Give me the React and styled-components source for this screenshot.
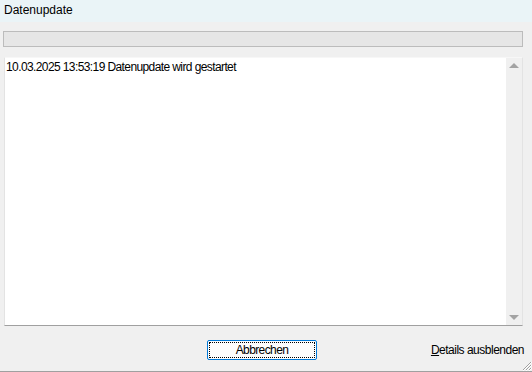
import styled, { createGlobalStyle } from "styled-components";

const GlobalStyle = createGlobalStyle`
  html, body {
    margin: 0;
    padding: 0;
    background: #f0f0f0;
  }
  body {
    font-family: "Liberation Sans", Arial, sans-serif;
    font-size: 12px;
    color: #000;
  }
`;

const Window = styled.div`
  width: 532px;
  height: 372px;
  display: flex;
  flex-direction: column;
  background: #f0f0f0;
  box-sizing: border-box;
  border-bottom: 1px solid #a0a0a0;
  position: relative;
  overflow: hidden;
`;

const TitleBar = styled.div`
  height: 22px;
  flex: none;
  background: #eaf4f7;
  display: flex;
  align-items: center;
  padding: 0 4px 2px;
  box-sizing: border-box;
`;

const Body = styled.div`
  flex: 1;
  display: flex;
  flex-direction: column;
  padding: 9px 9px 0 3px;
  min-height: 0;
`;

const ProgressBar = styled.div`
  height: 16px;
  width: 520px;
  box-sizing: border-box;
  border: 1px solid #bcbcbc;
  background: #e6e6e6;
  flex: none;
`;

const LogBox = styled.div`
  margin: 10px 0 0 1px;
  width: 519px;
  height: 269px;
  box-sizing: border-box;
  background: #fff;
  border-top: 1px solid #f7f7f7;
  border-left: 1px solid #e3e3e3;
  border-right: 1px solid #e3e3e3;
  border-bottom: 1px solid #a0a0a0;
  display: flex;
  flex: none;
`;

const LogText = styled.div`
  flex: 1;
  padding: 2px 1px;
  line-height: 14px;
  letter-spacing: -0.6px;
`;

const ScrollBar = styled.div`
  width: 16px;
  background: #f0f0f0;
  display: flex;
  flex-direction: column;
  justify-content: space-between;
  align-items: center;
  padding: 5px 0 5px;
`;

const Arrow = styled.div`
  width: 0;
  height: 0;
  border-left: 5px solid transparent;
  border-right: 5px solid transparent;
  ${(p) =>
    p.$down
      ? "border-top: 5px solid #a3a3a3;"
      : "border-bottom: 5px solid #a3a3a3;"}
`;

const Footer = styled.div`
  display: flex;
  align-items: flex-start;
  padding-top: 14px;
`;

const Button = styled.button`
  margin-left: 204px;
  width: 110px;
  height: 20px;
  box-sizing: border-box;
  border: 1px solid #0078d7;
  border-radius: 2px;
  background: #fdfdfd;
  font: inherit;
  padding: 1px;
  display: flex;
  cursor: default;
`;

const FocusRect = styled.span`
  flex: 1;
  border: 1px dotted #000;
  display: flex;
  align-items: center;
  justify-content: center;
  line-height: 14px;
  letter-spacing: -0.6px;
`;

const DetailsLink = styled.span`
  margin-left: auto;
  margin-right: -1px;
  padding-top: 3px;
  white-space: nowrap;
  letter-spacing: -0.5px;
  u {
    text-decoration: underline;
  }
`;

const Grip = styled.svg`
  position: absolute;
  right: 0;
  bottom: 0;
`;

export default function App() {
  return (
    <>
      <GlobalStyle />
      <Window>
        <TitleBar>Datenupdate</TitleBar>
        <Body>
          <ProgressBar />
          <LogBox>
            <LogText>10.03.2025 13:53:19 Datenupdate wird gestartet</LogText>
            <ScrollBar>
              <Arrow />
              <Arrow $down />
            </ScrollBar>
          </LogBox>
          <Footer>
            <Button>
              <FocusRect>Abbrechen</FocusRect>
            </Button>
            <DetailsLink>
              <u>D</u>etails ausblenden
            </DetailsLink>
          </Footer>
        </Body>
        <Grip width="12" height="12" viewBox="0 0 12 12">
          <path
            d="M11 3 L3 11 M11 6 L6 11 M11 9 L9 11"
            stroke="#a0a0a0"
            strokeWidth="1"
          />
          <path
            d="M12 3 L3 12 M12 6 L6 12 M12 9 L9 12"
            stroke="#ffffff"
            strokeWidth="1"
          />
        </Grip>
      </Window>
    </>
  );
}
